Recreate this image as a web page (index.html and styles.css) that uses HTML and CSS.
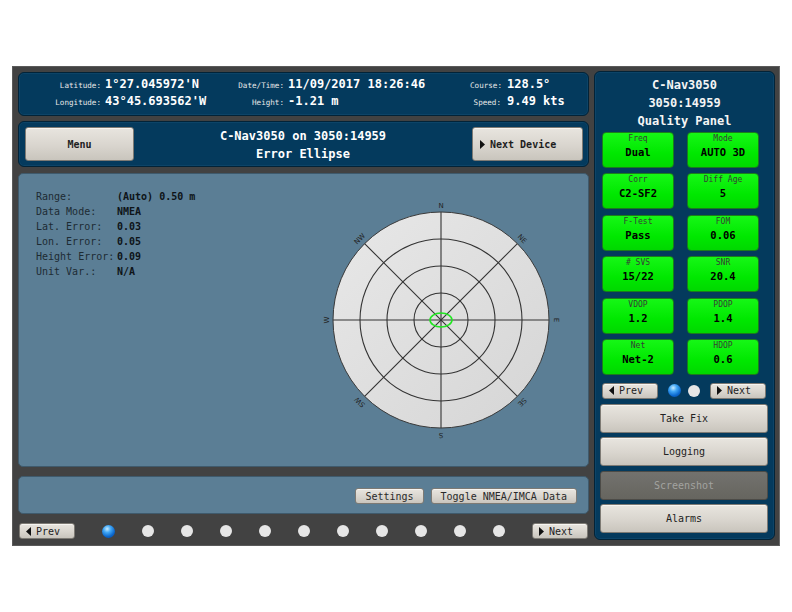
FILE: index.html
```html
<!DOCTYPE html>
<html>
<head>
<meta charset="utf-8">
<link rel="stylesheet" href="styles.css">
</head>
<body>
<div class="frame">
  <div class="left">
    <div class="panel info">
      <span class="lbl">Latitude:</span><span class="val">1°27.045972'N</span>
      <span class="lbl">Date/Time:</span><span class="val">11/09/2017 18:26:46</span>
      <span class="lbl">Course:</span><span class="val v3">128.5°</span>
      <span class="lbl">Longitude:</span><span class="val">43°45.693562'W</span>
      <span class="lbl">Height:</span><span class="val">-1.21 m</span>
      <span class="lbl">Speed:</span><span class="val v3">9.49 kts</span>
    </div>
    <div class="panel titlebar">
      <button class="btn big menu">Menu</button>
      <div class="title">C-Nav3050 on 3050:14959<br>Error Ellipse</div>
      <button class="btn big nextdev"><svg class="tri" width="5" height="9" viewBox="0 0 5 9"><polygon points="0,0 5,4.5 0,9" /></svg>Next Device</button>
    </div>
    <div class="main">
      <div class="data">
        <div class="row"><span class="dl">Range:</span><span class="dv">(Auto) 0.50 m</span></div>
        <div class="row"><span class="dl">Data Mode:</span><span class="dv">NMEA</span></div>
        <div class="row"><span class="dl">Lat. Error:</span><span class="dv">0.03</span></div>
        <div class="row"><span class="dl">Lon. Error:</span><span class="dv">0.05</span></div>
        <div class="row"><span class="dl">Height Error:</span><span class="dv">0.09</span></div>
        <div class="row"><span class="dl">Unit Var.:</span><span class="dv">N/A</span></div>
      </div>
      <svg class="polar" width="240" height="240" viewBox="0 0 240 240">
        <defs>
          <linearGradient id="pg" x1="0" y1="0" x2="1" y2="1">
            <stop offset="0" stop-color="#e8e8e8"/>
            <stop offset="1" stop-color="#d5d5d5"/>
          </linearGradient>
        </defs>
        <circle cx="120" cy="120" r="108" fill="url(#pg)" stroke="#3a3a3a" stroke-width="1"/>
        <g fill="none" stroke="#333" stroke-width="1.1">
          <circle cx="120" cy="120" r="81"/>
          <circle cx="120" cy="120" r="54"/>
          <circle cx="120" cy="120" r="27"/>
          <line x1="12" y1="120" x2="228" y2="120"/>
          <line x1="120" y1="12" x2="120" y2="228"/>
          <line x1="43.6" y1="43.6" x2="196.4" y2="196.4"/>
          <line x1="196.4" y1="43.6" x2="43.6" y2="196.4"/>
        </g>
        <ellipse cx="120" cy="120" rx="11" ry="7" fill="none" stroke="#22e622" stroke-width="1.6"/>
        <g class="cl" font-size="7" fill="#222" text-anchor="middle" dominant-baseline="central">
          <text x="120" y="6">N</text>
          <text x="120" y="235" transform="rotate(180 120 235)">S</text>
          <text x="6" y="120" transform="rotate(270 6 120)">W</text>
          <text x="235" y="120" transform="rotate(90 235 120)">E</text>
          <text x="39" y="39" transform="rotate(-45 39 39)">NW</text>
          <text x="201" y="39" transform="rotate(45 201 39)">NE</text>
          <text x="39" y="202" transform="rotate(225 39 202)">SW</text>
          <text x="201" y="202" transform="rotate(135 201 202)">SE</text>
        </g>
      </svg>
    </div>
    <div class="main bottompanel">
      <button class="btn small">Settings</button>
      <button class="btn small">Toggle NMEA/IMCA Data</button>
    </div>
    <div class="nav">
      <button class="btn navbtn"><svg class="tri" width="5" height="9" viewBox="0 0 5 9"><polygon points="5,0 0,4.5 5,9" /></svg>Prev</button>
      <div class="dots">
        <span class="dot on"></span><span class="dot"></span><span class="dot"></span><span class="dot"></span><span class="dot"></span><span class="dot"></span><span class="dot"></span><span class="dot"></span><span class="dot"></span><span class="dot"></span><span class="dot"></span>
      </div>
      <button class="btn navbtn"><svg class="tri" width="5" height="9" viewBox="0 0 5 9"><polygon points="0,0 5,4.5 0,9" /></svg>Next</button>
    </div>
  </div>
  <div class="panel right">
    <div class="rtitle">C-Nav3050<br>3050:14959<br>Quality Panel</div>
    <div class="tiles">
      <div class="tile"><span class="tl">Freq</span><span class="tv">Dual</span></div>
      <div class="tile"><span class="tl">Mode</span><span class="tv">AUTO 3D</span></div>
      <div class="tile"><span class="tl">Corr</span><span class="tv">C2-SF2</span></div>
      <div class="tile"><span class="tl">Diff Age</span><span class="tv">5</span></div>
      <div class="tile"><span class="tl">F-Test</span><span class="tv">Pass</span></div>
      <div class="tile"><span class="tl">FOM</span><span class="tv">0.06</span></div>
      <div class="tile"><span class="tl"># SVS</span><span class="tv">15/22</span></div>
      <div class="tile"><span class="tl">SNR</span><span class="tv">20.4</span></div>
      <div class="tile"><span class="tl">VDOP</span><span class="tv">1.2</span></div>
      <div class="tile"><span class="tl">PDOP</span><span class="tv">1.4</span></div>
      <div class="tile"><span class="tl">Net</span><span class="tv">Net-2</span></div>
      <div class="tile"><span class="tl">HDOP</span><span class="tv">0.6</span></div>
    </div>
    <div class="rnav">
      <button class="btn navbtn"><svg class="tri" width="5" height="9" viewBox="0 0 5 9"><polygon points="5,0 0,4.5 5,9" /></svg>Prev</button>
      <div class="rdots"><span class="dot on"></span><span class="dot"></span></div>
      <button class="btn navbtn"><svg class="tri" width="5" height="9" viewBox="0 0 5 9"><polygon points="0,0 5,4.5 0,9" /></svg>Next</button>
    </div>
    <div class="actions">
      <button class="btn act">Take Fix</button>
      <button class="btn act">Logging</button>
      <button class="btn act disabled">Screenshot</button>
      <button class="btn act">Alarms</button>
    </div>
  </div>
</div>
</body>
</html>
```

FILE: styles.css
```css
html, body {
  margin: 0;
  padding: 0;
  background: #ffffff;
}
body {
  font-family: "DejaVu Sans Mono", monospace;
}
.frame {
  margin: 66px 0 0 12px;
  width: 768px;
  height: 480px;
  box-sizing: border-box;
  background: #424242;
  border: 1px solid #5a5a5a;
  border-right-color: #6a6a6a;
  padding: 4px 4px 5px 5px;
  display: flex;
  gap: 5px;
}
.left {
  width: 571px;
  display: flex;
  flex-direction: column;
}
.panel {
  background: #043a5d;
  border: 1px solid #022338;
  border-radius: 6px;
  box-sizing: border-box;
  box-shadow: inset 0 0 0 1px #0c4468;
}
.info {
  margin-top: 1px;
  height: 44px;
  display: grid;
  grid-template-columns: 82px 109px 74px 186px 31px auto;
  grid-template-rows: 17px 17px;
  align-content: center;
  align-items: baseline;
  color: #f2f2f2;
}
.lbl {
  font-family: "DejaVu Sans Mono", monospace;
  font-size: 7.6px;
  text-align: right;
  color: #e8e8e8;
  white-space: nowrap;
}
.val {
  font-weight: bold;
  font-size: 12px;
  padding-left: 4px;
  white-space: nowrap;
  color: #ffffff;
}
.val.v3 {
  padding-left: 6px;
}
.titlebar {
  margin-top: 5px;
  height: 46px;
  display: flex;
  align-items: center;
  padding: 0 5px 0 6px;
}
.title {
  flex: 1;
  text-align: center;
  color: #ffffff;
  font-weight: bold;
  font-size: 12px;
  line-height: 18px;
  margin-top: 1px;
}
.btn {
  font-family: "DejaVu Sans Mono", monospace;
  background: linear-gradient(#e8e5df, #d9d5ce 55%, #c9c5bd);
  border: 1px solid #7d7a74;
  border-radius: 3px;
  box-shadow: inset 0 1px 0 #f6f4f0;
  color: #1e1e1e;
  padding: 0;
  display: flex;
  align-items: center;
  justify-content: center;
  box-sizing: border-box;
}
.btn.big {
  height: 34px;
  font-weight: bold;
  font-size: 10px;
}
.menu {
  width: 109px;
}
.nextdev {
  width: 111px;
  justify-content: flex-start;
  padding-left: 7px;
}
.tri {
  fill: #111;
  margin-right: 5px;
  flex: none;
}
.main {
  margin-top: 6px;
  height: 294px;
  background: #5b7e95;
  border: 1px solid #3f5a6c;
  border-radius: 5px;
  box-sizing: border-box;
  display: flex;
  align-items: center;
}
.data {
  align-self: flex-start;
  width: 285px;
  padding: 15px 0 0 17px;
  font-size: 10px;
  line-height: 15px;
}
.row {
  display: flex;
  white-space: nowrap;
}
.dl {
  width: 81px;
  color: #1d2b33;
}
.dv {
  color: #0e1418;
  font-weight: bold;
}
.polar {
  display: block;
  flex: none;
}
.cl {
  font-family: "DejaVu Sans", sans-serif;
}
.bottompanel {
  margin-top: 9px;
  height: 38px;
  align-items: flex-start;
  justify-content: flex-end;
  gap: 7px;
  padding: 11px 11px 0 0;
}
.btn.small {
  height: 16px;
  font-size: 10px;
  padding: 0 9px;
  color: #2a2a2a;
}
.nav {
  margin-top: 8px;
  height: 18px;
  display: flex;
  align-items: center;
  padding-left: 1px;
  gap: 27px;
}
.btn.navbtn {
  width: 56px;
  height: 16px;
  font-size: 10px;
  color: #222;
  justify-content: flex-start;
  padding-left: 6px;
}
.dots {
  display: flex;
  gap: 27px;
  align-items: center;
}
.dot {
  display: block;
  width: 12px;
  height: 12px;
  border-radius: 50%;
  background: #e6e6e6;
  flex: none;
}
.dot.on {
  width: 13px;
  height: 13px;
  background: radial-gradient(circle at 40% 30%, #c8ecff 0, #42a8f6 30%, #0a66cc 65%, #074290 100%);
}
.right {
  width: 181px;
  margin-top: 0;
  height: 469px;
  padding: 4px 0 0 0;
  display: flex;
  flex-direction: column;
}
.rtitle {
  text-align: center;
  color: #f4f4f4;
  font-weight: bold;
  font-size: 12px;
  line-height: 18px;
}
.tiles {
  margin: 2px 0 0 7px;
  display: grid;
  grid-template-columns: 72px 72px;
  grid-auto-rows: 36px;
  column-gap: 13px;
  row-gap: 5.4px;
}
.tile {
  background: linear-gradient(#16f716, #00e800 60%, #00d800);
  border: 1px solid #1b7d1b;
  border-radius: 4px;
  box-sizing: border-box;
  display: flex;
  flex-direction: column;
  align-items: center;
  padding-top: 1px;
  color: #000;
}
.tl {
  font-size: 8px;
  line-height: 10px;
  color: #353d35;
}
.tv {
  font-size: 10.5px;
  font-weight: bold;
  line-height: 14px;
  margin-top: 1px;
}
.rnav {
  margin: 8px 0 0 7px;
  width: 164px;
  display: flex;
  align-items: center;
  justify-content: space-between;
}
.rdots {
  display: flex;
  gap: 7px;
  align-items: center;
}
.actions {
  margin: 5px 0 0 5px;
  width: 168px;
  display: flex;
  flex-direction: column;
  gap: 4.4px;
}
.btn.act {
  height: 29px;
  font-size: 10px;
  color: #222;
}
.btn.act.disabled {
  background: linear-gradient(#73726e, #66655f);
  border-color: #4c4b47;
  box-shadow: none;
  color: #a3a3a0;
}
```
